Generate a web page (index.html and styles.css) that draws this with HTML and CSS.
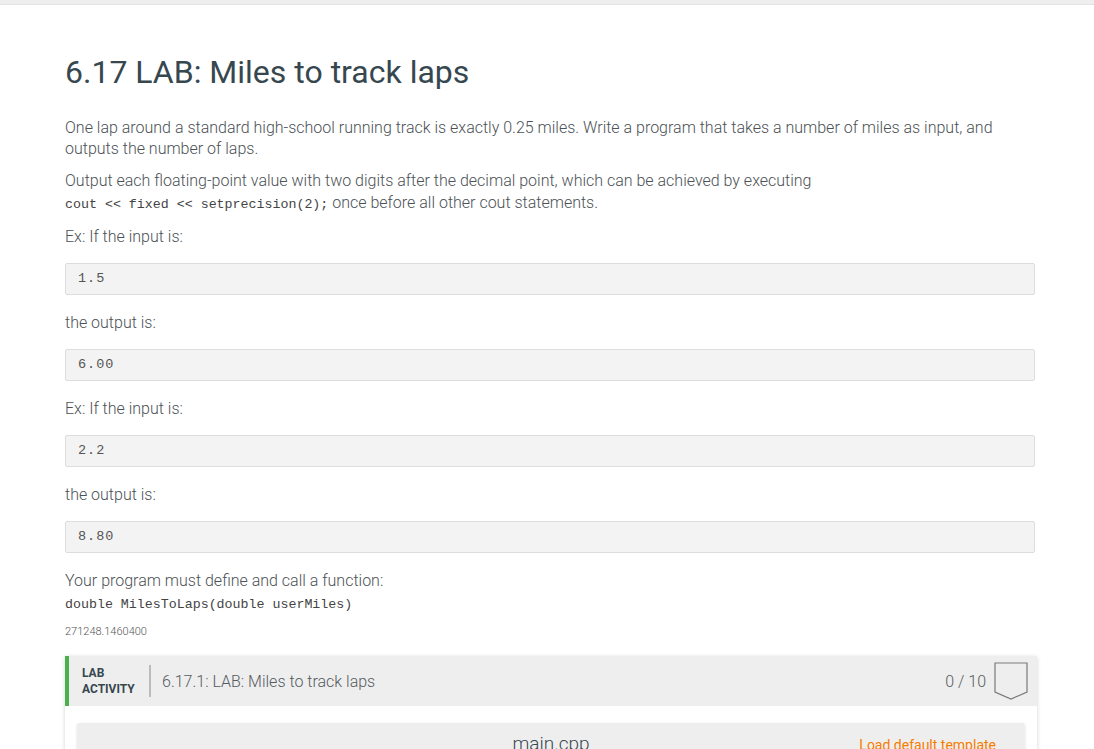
FILE: index.html
```html
<!DOCTYPE html>
<html>
<head>
<meta charset="utf-8">
<link rel="stylesheet" href="styles.css">
</head>
<body>
<div class="topbar"></div>
<main class="content">
  <h1 class="title">6.17 LAB: Miles to track laps</h1>
  <p class="para">One lap around a standard high-school running track is exactly 0.25 miles. Write a program that takes a number of miles as input, and outputs the number of laps.</p>
  <p class="para">Output each floating-point value with two digits after the decimal point, which can be achieved by executing<br><code class="inline">cout &lt;&lt; fixed &lt;&lt; setprecision(2);</code> once before all other cout statements.</p>
  <p class="para">Ex: If the input is:</p>
  <pre class="block">1.5</pre>
  <p class="para">the output is:</p>
  <pre class="block">6.00</pre>
  <p class="para">Ex: If the input is:</p>
  <pre class="block">2.2</pre>
  <p class="para">the output is:</p>
  <pre class="block">8.80</pre>
  <p class="para">Your program must define and call a function:<br><code class="inline">double MilesToLaps(double userMiles)</code></p>
  <div class="ident">271248.1460400</div>

  <section class="lab">
    <header class="lab-head">
      <div class="lab-label">LAB<br>ACTIVITY</div>
      <div class="lab-sep"></div>
      <div class="lab-title">6.17.1: LAB: Miles to track laps</div>
      <div class="lab-score">0 / 10</div>
      <svg class="badge" width="34" height="39" viewBox="0 0 34 39">
        <path d="M1 1 H33 V30 L17 37 L1 30 Z" fill="none" stroke="#7a7a7a" stroke-width="1.2"/>
      </svg>
    </header>
    <div class="lab-body">
      <div class="editor-bar">
        <span class="filename">main.cpp</span>
        <span class="load">Load default template</span>
      </div>
    </div>
  </section>
</main>
</body>
</html>
```
FILE: styles.css
```css
html, body {
  margin: 0;
  padding: 0;
  background: #ffffff;
}
body {
  font-family: Roboto, "Noto Sans", sans-serif;
  font-weight: 300;
  color: #4b5155;
  overflow: hidden;
  height: 749px;
}
.topbar {
  height: 4px;
  background: #eeeeee;
  border-bottom: 1px solid #e3e3e3;
}
.content {
  width: 970px;
  margin-left: 65px;
  padding-top: 47px;
}
.title {
  margin: 0 0 25px 0;
  font-size: 32px;
  font-weight: 400;
  line-height: 40px;
  color: #37474f;
}
.para {
  margin: 0 0 11px 0;
  font-size: 16px;
  line-height: 21px;
}
.inline {
  display: inline-block;
  padding-top: 3px;
  font-family: "Liberation Mono", monospace;
  font-size: 13.3px;
  color: #444444;
  line-height: 21px;
}
.block {
  margin: 16px 0 17px 0;
  height: 32px;
  box-sizing: border-box;
  padding: 0 12px;
  background: #f3f3f3;
  border: 1px solid #dddddd;
  border-radius: 2px;
  font-family: "Liberation Mono", monospace;
  font-size: 13.5px;
  line-height: 30px;
  letter-spacing: 1px;
  color: #555;
}
.ident {
  font-size: 11px;
  color: #555;
  margin-top: -1px;
  line-height: 14px;
}
.lab {
  margin-top: 17px;
  width: 972px;
  box-shadow: 0 1px 4px rgba(0,0,0,0.18);
}
.lab-head {
  display: flex;
  align-items: center;
  height: 50px;
  background: #eeeeee;
  border-left: 4px solid #4caf50;
  padding: 0 9px 0 13px;
}
.lab-label {
  font-size: 12px;
  font-weight: 700;
  line-height: 16px;
  color: #37474f;
  width: 67px;
}
.lab-sep {
  width: 2px;
  height: 32px;
  background: #bbbbbb;
  margin-right: 11px;
}
.lab-title {
  flex: 1;
  font-size: 16px;
  color: #555b5f;
}
.lab-score {
  font-size: 16px;
  color: #555b5f;
  margin-right: 8px;
}
.badge {
  display: block;
}
.lab-body {
  background: #ffffff;
  padding: 17px 12px 0 12px;
}
.editor-bar {
  position: relative;
  height: 50px;
  background: #eeeeee;
  border-radius: 3px 3px 0 0;
  box-shadow: 0 1px 3px rgba(0,0,0,0.12);
}
.filename {
  position: absolute;
  left: 0;
  right: 0;
  top: 9px;
  text-align: center;
  font-size: 19px;
  font-weight: 300;
  color: #37474f;
}
.load {
  position: absolute;
  right: 29px;
  top: 14px;
  font-size: 14px;
  font-weight: 400;
  color: #f57c00;
}
```
